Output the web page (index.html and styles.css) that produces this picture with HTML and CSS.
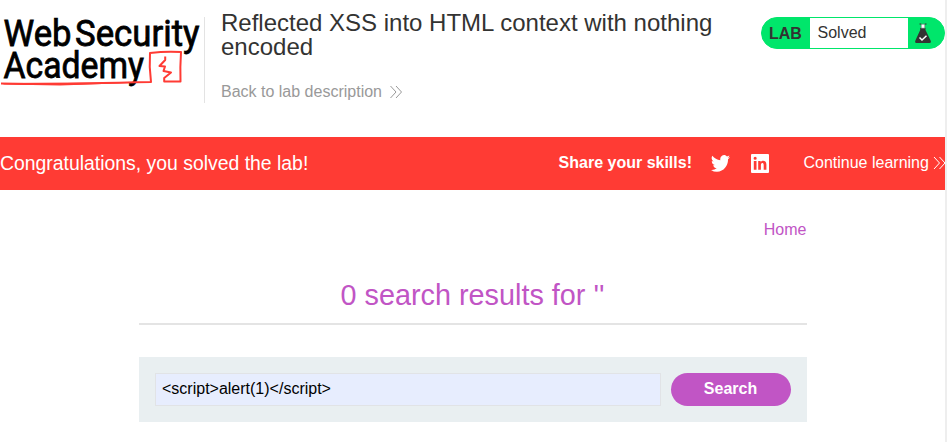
FILE: index.html
```html
<!DOCTYPE html>
<html lang="en">
<head>
<meta charset="utf-8">
<title>Reflected XSS into HTML context with nothing encoded</title>
<link rel="stylesheet" href="styles.css">
</head>
<body>
<div class="page">
  <header class="lab-header">
    <svg class="logo" width="204" height="75" viewBox="0 0 204 75" role="img" aria-label="Web Security Academy">
      <g class="logo-text">
        <text x="3.500" y="28.500" textLength="68" lengthAdjust="spacingAndGlyphs">Web</text>
        <text x="75" y="28.500" textLength="124.500" lengthAdjust="spacingAndGlyphs">Security</text>
        <text x="3.500" y="61" textLength="140.500" lengthAdjust="spacingAndGlyphs">Academy</text>
      </g>
      <path class="logo-line" d="M1 66.500Q50 67.500 85 66.500T151 65Q149 50 150 36Q166 34 181 35Q180 50 180.500 64.500H164.200V61L171 55.500L163.500 54L165 49.500L159.500 49L165.200 43V39.500"/>
      <path class="logo-swash" d="M1 66L80 65.500L130 65.500V66L60 68.500L4 67.500Z"/>
    </svg>
    <div class="title-block">
      <h2>Reflected XSS into HTML context with nothing encoded</h2>
      <a class="back">Back to lab description
        <svg width="14" height="14" viewBox="0 0 14 14"><path d="M1.500 1L7 7L1.500 13M7 1L12.500 7L7 13"/></svg>
      </a>
    </div>
    <div class="status">
      <span class="status-label">LAB</span>
      <span class="status-value">Solved</span>
      <span class="status-icon"><svg width="18" height="21" viewBox="0 0 18 21">
        <path class="flask" d="M6.200 5H11.500V7L16.600 17.500Q17.500 20 15.500 20H2.500Q.500 20 1.400 17.500L6.200 7Z"/>
        <path class="neck" d="M7.200 1.200H10.800V5.200H7.200Z"/>
        <path class="rim" d="M5.500 1H7.200M10.800 1H12.500"/>
        <path class="tick" d="M5.500 14.500L8 17L12.500 12.800"/>
      </svg></span>
    </div>
  </header>
  <section class="banner">
    <span class="congrats">Congratulations, you solved the lab!</span>
    <strong class="share">Share your skills!</strong>
    <svg class="twitter" width="19" height="17" viewBox="0 0 24 20" preserveAspectRatio="none"><path d="M24 2.400a9.800 9.800 0 0 1-2.800.8A4.900 4.900 0 0 0 23.300.500a9.900 9.900 0 0 1-3.100 1.200A4.900 4.900 0 0 0 11.800 6.100 14 14 0 0 1 1.700 1a4.900 4.900 0 0 0 1.500 6.600A4.900 4.900 0 0 1 1 7v.1a4.900 4.900 0 0 0 3.900 4.800 5 5 0 0 1-2.200.1 4.900 4.900 0 0 0 4.600 3.400A9.900 9.900 0 0 1 0 17.500 14 14 0 0 0 7.500 19.700c9.100 0 14.300-7.700 14-14.600A10 10 0 0 0 24 2.400Z"/></svg>
    <svg class="linkedin" width="18" height="19" viewBox="0 0 18 19"><path fill-rule="evenodd" d="M1 0H17Q18 0 18 1V18Q18 19 17 19H1Q0 19 0 18V1Q0 0 1 0ZM2.800 7H5.500V15.800H2.800ZM2.600 4.200A1.550 1.550 0 1 0 5.700 4.200A1.550 1.550 0 1 0 2.600 4.200ZM7.200 7H9.700V8.200C11 6 15.400 6.200 15.400 10.500V15.800H12.700V11C12.700 8.300 9.900 8.500 9.900 11V15.800H7.200Z"/></svg>
    <a class="continue">Continue learning<svg width="12" height="14" viewBox="0 0 12 14"><path d="M1 1L6.500 7L1 13M6.500 1L12 7L6.500 13"/></svg></a>
  </section>
  <main class="content">
    <nav><a>Home</a></nav>
    <h1>0 search results for ''</h1>
    <form class="search">
      <input type="text" value="&lt;script&gt;alert(1)&lt;/script&gt;">
      <button type="button">Search</button>
    </form>
  </main>
</div>
</body>
</html>
```
FILE: styles.css
```css
* { box-sizing: border-box; }
body {
  margin: 0;
  background: #fff;
  border-right: 2px solid #eee;
  color: #333332;
  font: 16px/20px "Liberation Sans", Arial, sans-serif;
}
.page { height: 442px; overflow: hidden; }
.lab-header { display: flex; align-items: flex-start; height: 137px; padding-top: 17px; }
.logo { flex: none; overflow: visible; }
.logo-text { font: 400 37.5px Roboto, sans-serif; fill: #000; stroke: #000; stroke-width: .8; }
.logo-line { fill: none; stroke: #ff3b34; stroke-width: 2; stroke-linejoin: round; }
.logo-swash { fill: #ff3b34; }
.title-block { flex: 1; height: 86px; padding-left: 16px; border-left: 1px solid #e3e3e3; }
h2 { width: 520px; margin: -6px 0 0; font-size: 24px; line-height: 24px; font-weight: 400; }
.back { display: flex; align-items: center; gap: 7.4px; margin-top: 23px; color: #999; }
.back svg { margin-top: -1px; }
.back svg, .continue svg { fill: none; stroke: currentColor; stroke-width: 1; }
.status {
  display: flex;
  width: 184px;
  height: 32px;
  overflow: hidden;
  border: 1px solid #00e66b;
  border-radius: 16px;
  background: #00e66b;
  line-height: 30px;
}
.status-label { width: 48px; padding-left: 7px; font-weight: 700; line-height: 31px; }
.status-value { width: 98px; padding-left: 7.5px; background: #fff; }
.status-icon { padding: 5px 0 0 6px; line-height: 0; }
.flask { fill: #333332; }
.neck { fill: #fff; stroke: #555; stroke-width: .5; }
.rim { stroke: #333332; }
.tick { fill: none; stroke: #fff; stroke-width: 1.5; }
.banner { display: flex; align-items: center; height: 53px; padding-bottom: 1px; background: #ff3b34; color: #fff; fill: #fff; }
.congrats { width: 558.6px; font-size: 19.4px; }
.share { width: 152.4px; }
.linkedin { margin-left: 20.6px; }
.continue { display: flex; align-items: center; gap: 4px; margin-left: 34.9px; white-space: nowrap; }
.content { width: 668px; margin: 30px auto 0 139px; }
nav { padding-right: .6px; text-align: right; color: #c155c5; }
h1 {
  height: 65px;
  margin: 20px 0 32px;
  padding: 19px 1px 0 0;
  border-bottom: 2px solid #e4e4e4;
  color: #c155c5;
  font-size: 28.8px;
  line-height: 32px;
  font-weight: 400;
  text-align: center;
}
.search { display: flex; gap: 10px; height: 65px; padding: 16px; background: #e9eff1; }
input { flex: 1; min-width: 0; padding: 0 6px 2px; border: 1px solid #e1e3e6; background: #e7edfe; color: #000; font: inherit; }
button { width: 120px; padding: 0 1px 2px 0; border: 0; border-radius: 17px; background: #c155c5; color: #fff; font: inherit; font-weight: 700; }
```
